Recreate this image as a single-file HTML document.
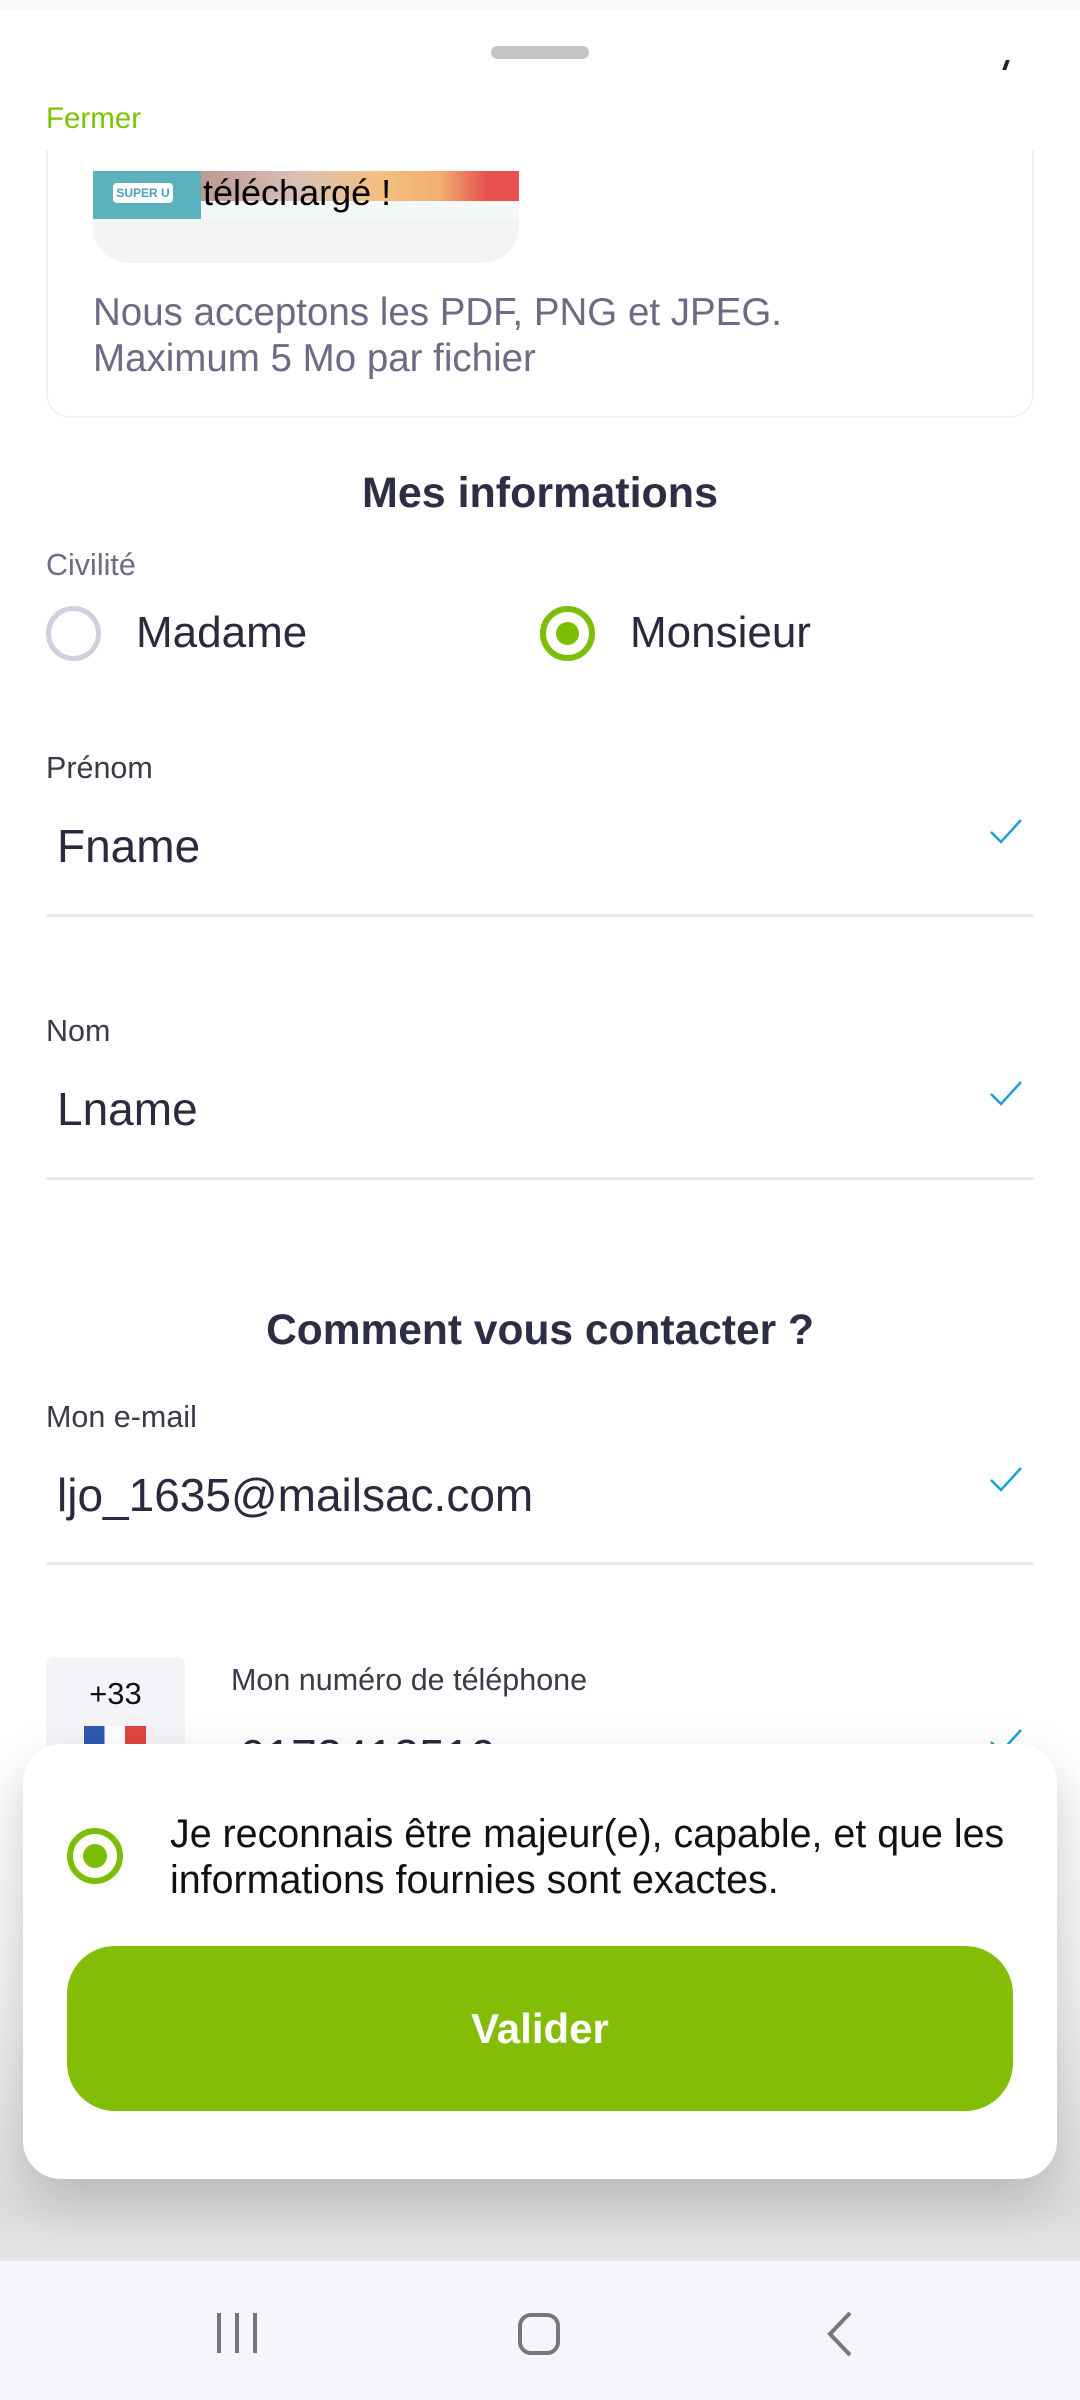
<!DOCTYPE html>
<html><head><meta charset="utf-8"><style>
*{margin:0;padding:0;box-sizing:border-box}
body{width:1080px;height:2400px;position:relative;overflow:hidden;background:#fff;font-family:"Liberation Sans",sans-serif}
.a{position:absolute;white-space:nowrap}
.lbl{font-size:30.5px;color:#3a3a48;line-height:1}
.val{font-size:46px;color:#2a2a3e;line-height:1}
.line{position:absolute;left:46px;width:988px;height:3px;background:#e8e8ef}
.chk{position:absolute;width:34px;height:26px}
</style></head><body>
<div class="a" style="left:0;top:0;width:1080px;height:10px;background:#f8f8f9"></div>
<div class="a" style="left:491px;top:46px;width:98px;height:13px;border-radius:7px;background:#c4c4c4"></div>
<div class="a" style="left:1004px;top:60px;width:4px;height:10px;background:#222;transform:skewX(-20deg)"></div>
<div class="a" style="left:46px;top:104px;font-size:29.5px;color:#7cc400;line-height:1">Fermer</div>

<div class="a" style="left:46px;top:150px;width:988px;height:268px;border:2px solid #f0f0f5;border-top:none;border-radius:0 0 24px 24px"></div>
<div class="a" style="left:93px;top:171px;width:426px;height:92px;background:#f4f4f4;border-radius:0 0 36px 36px"></div>
<div class="a" style="left:93px;top:171px;width:426px;height:48px;background:#e8e8e8;overflow:hidden">
 <div class="a" style="left:0;top:0;width:108px;height:48px;background:#5bb2bd"></div>
 <div class="a" style="left:20px;top:12px;width:60px;height:20px;background:#fff;border-radius:4px;font-size:12px;color:#4a9fc0;font-weight:bold;text-align:center;line-height:20px">SUPER U</div>
 <div class="a" style="left:108px;top:0;width:318px;height:30px;background:linear-gradient(90deg,#b89a90,#d8c0b8 30%,#f3c080 55%,#f0b070 75%,#e85050 90%)"></div>
 <div class="a" style="left:108px;top:30px;width:318px;height:18px;background:#f5f8f8"></div>
 <div class="a" style="left:110px;top:4px;font-size:36px;color:#000;line-height:1">téléchargé !</div>
</div>
<div class="a" style="left:93px;top:290px;font-size:38.5px;color:#6b6b85;line-height:46px">Nous acceptons les PDF, PNG et JPEG.<br>Maximum 5 Mo par fichier</div>

<div class="a" style="left:0;width:1080px;top:472px;text-align:center;font-size:43px;font-weight:bold;color:#2d2d45;line-height:1">Mes informations</div>
<div class="a" style="left:46px;top:550px;font-size:30.5px;color:#6b6b85;line-height:1">Civilité</div>
<div class="a" style="left:46px;top:606px;width:55px;height:55px;border-radius:50%;border:5px solid #cfcfde"></div>
<div class="a" style="left:136px;top:611px;font-size:44px;color:#2a2a3e;line-height:1">Madame</div>
<div class="a" style="left:540px;top:606px;width:55px;height:55px;border-radius:50%;border:6px solid #7cbd06"></div>
<div class="a" style="left:556px;top:622px;width:23px;height:23px;border-radius:50%;background:#7cbd06"></div>
<div class="a" style="left:630px;top:611px;font-size:44px;color:#2a2a3e;line-height:1">Monsieur</div>

<div class="a lbl" style="left:46px;top:753px">Prénom</div>
<div class="a val" style="left:57px;top:823px">Fname</div>
<svg class="chk" style="left:989px;top:818px" viewBox="0 0 34 26"><path d="M2 14 L12 24 L32 2" fill="none" stroke="#1aa0d8" stroke-width="2.5"/></svg>
<div class="line" style="top:914px"></div>

<div class="a lbl" style="left:46px;top:1016px">Nom</div>
<div class="a val" style="left:57px;top:1086px">Lname</div>
<svg class="chk" style="left:989px;top:1080px" viewBox="0 0 34 26"><path d="M2 14 L12 24 L32 2" fill="none" stroke="#1aa0d8" stroke-width="2.5"/></svg>
<div class="line" style="top:1177px"></div>

<div class="a" style="left:0;width:1080px;top:1310px;text-align:center;font-size:42.5px;font-weight:bold;color:#2d2d45;line-height:1">Comment vous contacter ?</div>
<div class="a lbl" style="left:46px;top:1402px">Mon e-mail</div>
<div class="a val" style="left:57px;top:1472px">ljo_1635@mailsac.com</div>
<svg class="chk" style="left:989px;top:1466px" viewBox="0 0 34 26"><path d="M2 14 L12 24 L32 2" fill="none" stroke="#1aa0d8" stroke-width="2.5"/></svg>
<div class="line" style="top:1562px"></div>

<div class="a" style="left:46px;top:1657px;width:139px;height:120px;background:#f4f4f9;border-radius:8px"></div>
<div class="a" style="left:46px;width:139px;top:1678px;text-align:center;font-size:31px;color:#111;line-height:1">+33</div>
<div class="a" style="left:84px;top:1726px;width:62px;height:30px;background:linear-gradient(90deg,#2d5ab0 33%,#fff 33%,#fff 66%,#e0483e 66%)"></div>
<div class="a" style="left:231px;top:1665px;font-size:30.5px;color:#3a3a48;line-height:1">Mon numéro de téléphone</div>
<div class="a val" style="left:240px;top:1733px">0173412510</div>
<svg class="chk" style="left:989px;top:1728px" viewBox="0 0 34 26"><path d="M2 14 L12 24 L32 2" fill="none" stroke="#1aa0d8" stroke-width="2.5"/></svg>

<div class="a" style="left:0;top:1760px;width:1080px;height:501px;background:linear-gradient(#fff 0%,#f3f3f3 45%,#dcdcdc 90%,#e6e6e8 100%)"></div>
<div class="a" style="left:23px;top:1744px;width:1034px;height:435px;background:#fff;border-radius:38px;box-shadow:0 20px 50px rgba(0,0,0,.18)"></div>
<div class="a" style="left:67px;top:1828px;width:56px;height:56px;border-radius:50%;border:6px solid #7cbd06"></div>
<div class="a" style="left:83px;top:1844px;width:24px;height:24px;border-radius:50%;background:#7cbd06"></div>
<div class="a" style="left:170px;top:1811px;font-size:39.4px;color:#111;line-height:46px">Je reconnais être majeur(e), capable, et que les<br>informations fournies sont exactes.</div>
<div class="a" style="left:67px;top:1946px;width:946px;height:165px;background:#84bd06;border-radius:48px;color:#fff;font-weight:bold;font-size:42px;text-align:center;line-height:165px">Valider</div>

<div class="a" style="left:0;top:2261px;width:1080px;height:139px;background:#f5f5fa"></div>
<div class="a" style="left:217px;top:2313px;width:4px;height:40px;background:#777"></div>
<div class="a" style="left:235px;top:2313px;width:4px;height:40px;background:#777"></div>
<div class="a" style="left:253px;top:2313px;width:4px;height:40px;background:#777"></div>
<div class="a" style="left:518px;top:2313px;width:42px;height:42px;border:4px solid #777;border-radius:13px"></div>
<svg class="a" style="left:826px;top:2311px" width="28" height="46" viewBox="0 0 28 46"><path d="M24 2 L4 23 L24 44" fill="none" stroke="#777" stroke-width="4"/></svg>
</body></html>
